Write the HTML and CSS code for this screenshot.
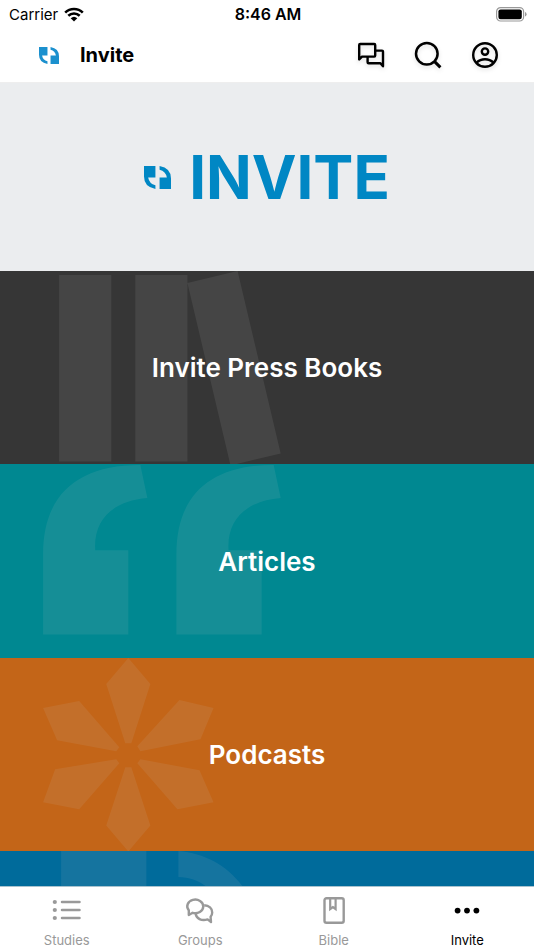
FILE: index.html
```
<!DOCTYPE html>
<html lang="en">

<head>
    <meta charset="UTF-8" />
    <meta name="viewport" content="width=device-width, initial-scale=1" />
    <title>Invite</title>
    <link rel="stylesheet" href="styles.css">
</head>

<body>

    <!-- Header -->
    <header>
        <div class="status-bar">
            <div class="carrier">
                <span>Carrier</span>
                <svg width="20" height="15" viewBox="0 0 20 15" fill="none" stroke="#000" stroke-width="2.6">
                    <path d="M1.2 5.6A12.6 12.6 0 0 1 18.8 5.6" />
                    <path d="M4.3 8.8A8.2 8.2 0 0 1 15.7 8.8" />
                    <path d="M10 14.4L6.7 11.2A4.8 4.8 0 0 1 13.3 11.2Z" fill="#000" stroke="none" />
                </svg>
            </div>
            <div class="time">8:46 AM</div>
            <svg class="battery" width="31" height="15" viewBox="0 0 31 15">
                <rect x="0.6" y="0.6" width="27" height="13.4" rx="4" fill="none" stroke="#999" stroke-width="1.2" />
                <rect x="2.4" y="2.4" width="23.4" height="9.8" rx="2.2" />
                <path d="M29 5V9.6Q30.6 9 30.6 7.3T29 5Z" fill="#999" />
            </svg>
        </div>

        <div class="app-bar">
            <svg class="app-logo" width="20" height="17" viewBox="0 0 26 22" fill="#1b90ce">
                <path d="M0 0H11V11H4Q5 17 11 18.5V22Q0 20 0 10Z" />
                <path d="M26 22H15V11H22Q21 5 15 3.5V0Q26 2 26 12Z" />
            </svg>
            <h1>Invite</h1>
            <div class="actions">
                <button type="button" aria-label="Messages">
                    <svg width="28" height="28" viewBox="0 0 28 28" fill="none" stroke="#000" stroke-width="2.4" stroke-linejoin="round">
                        <path d="M2.2 18.4V4Q2.2 3 3.2 3H17.2Q18.2 3 18.2 4V14.6Q18.2 15.6 17.2 15.6H5Z" />
                        <path d="M18.2 9.6H25Q26 9.6 26 10.6V25.2L23.4 22.2H11.6Q10.6 22.2 10.6 21.2V15.6" />
                    </svg>
                </button>
                <button type="button" aria-label="Search">
                    <svg width="28" height="28" viewBox="0 0 28 28" fill="none" stroke="#000" stroke-width="2.5">
                        <circle cx="12.8" cy="12.8" r="10.8" />
                        <path d="M20.4 20.4L26.4 26.4" stroke-width="3" />
                    </svg>
                </button>
                <button type="button" aria-label="Account">
                    <svg width="28" height="28" viewBox="0 0 28 28" fill="none" stroke="#000" stroke-width="2.4">
                        <circle cx="14" cy="14" r="11.8" />
                        <circle cx="14" cy="10.6" r="3.2" />
                        <path d="M5.6 21.6Q9 18.2 14 18.2T22.4 21.6" />
                    </svg>
                </button>
            </div>
        </div>
    </header>

    <!-- Banner and tiles -->
    <main>
        <div class="banner">
            <svg width="27" height="23" viewBox="0 0 26 22" fill="#0087c4">
                <path d="M0 0H11V11H4Q5 17 11 18.5V22Q0 20 0 10Z" />
                <path d="M26 22H15V11H22Q21 5 15 3.5V0Q26 2 26 12Z" />
            </svg>
            <span>INVITE</span>
        </div>

        <a class="tile books" href="#books">
            <svg class="tile-art" viewBox="0 0 320 193">
                <path d="M59 4H111V190H59ZM135 4H187V190H135ZM187 12L237 0L280 182L230 194Z" />
            </svg>
            <h2>Invite Press Books</h2>
        </a>

        <a class="tile articles" href="#articles">
            <svg class="tile-art" viewBox="0 0 320 193">
                <path d="M43 170V90C43 30 78 1 140 1L147 34C112 37 93 56 95 86H128V170Z" />
                <path d="M176 170V90C176 30 211 1 273 1L280 34C245 37 226 56 228 86H261V170Z" />
            </svg>
            <h2>Articles</h2>
        </a>

        <a class="tile podcasts" href="#podcasts">
            <svg class="tile-art" viewBox="0 0 320 193">
                <path d="M128 0L150 26L131 85H125L106 26Z" />
                <path d="M128 193L150 167L131 109H125L106 167Z" />
                <path d="M43 50L79 43L119 89L116 93L57 82Z" />
                <path d="M213 50L179 42L137 88L140 93L200 81Z" />
                <path d="M43 144L79 151L119 105L116 101L55 111Z" />
                <path d="M213 144L177 151L137 105L140 101L199 112Z" />
            </svg>
            <h2>Podcasts</h2>
        </a>

        <div class="tile more">
            <svg class="tile-art" viewBox="0 0 320 193">
                <path d="M61 0H146V86H61ZM178 0C212 3 240 22 256 60L222 60C214 38 200 27 178 26Z" />
            </svg>
        </div>
    </main>

    <!-- Tab Bar -->
    <nav>
        <a href="#studies">
            <svg width="30" height="30" viewBox="0 0 30 30" fill="#999" stroke="#999" stroke-width="2.5" stroke-linecap="round">
                <path d="M10 7H27.500M10 15H27.500M10 23H27.500" />
                <g stroke="none">
                    <circle cx="2.800" cy="7" r="2.1" />
                    <circle cx="2.800" cy="15" r="2.1" />
                    <circle cx="2.800" cy="23" r="2.1" />
                </g>
            </svg>
            <span>Studies</span>
        </a>
        <a href="#groups">
            <svg width="30" height="30" viewBox="0 0 30 30" fill="none" stroke="#999" stroke-width="2.4" stroke-linejoin="round">
                <path d="M3.8 20V15.400A8 6.800 0 1 1 7.600 17.800Z" />
                <path d="M19.200 10.200C24 10.500 27.200 13.400 27.200 17.400C27.200 19.200 26.600 20.600 25.600 21.800L26 27L22.600 24.400C16.500 26.400 11.200 23.600 10.600 18.400" />
            </svg>
            <span>Groups</span>
        </a>
        <a href="#bible">
            <svg width="30" height="30" viewBox="0 0 30 30" fill="none" stroke="#999" stroke-width="2.4">
                <rect x="5.5" y="3.2" width="19.2" height="24.6" rx="2" />
                <path d="M11.2 3V14L13.900 12L16.600 14V3" stroke-width="2.2" />
            </svg>
            <span>Bible</span>
        </a>
        <a class="active" href="#invite">
            <svg width="30" height="30" viewBox="0 0 30 30">
                <circle cx="5.6" cy="15.6" r="2.9" />
                <circle cx="15" cy="15.6" r="2.9" />
                <circle cx="24.4" cy="15.6" r="2.9" />
            </svg>
            <span>Invite</span>
        </a>
    </nav>

</body>

</html>
```

FILE: styles.css
```
body {
    font-family: Inter, "Liberation Sans", sans-serif;
    background-color: #fff;
    color: #000;
    margin: 0;
    height: 100vh;
    display: flex;
    flex-direction: column;
}

a {
    color: inherit;
    text-decoration: none;
}

svg {
    display: block;
}

h1,
h2 {
    margin: 0;
}

.status-bar {
    display: grid;
    grid-template-columns: 1fr auto 1fr;
    align-items: center;
    height: 28px;
    padding: 0 7px 0 9px;
    font-size: 16px;
}

.carrier {
    display: flex;
    align-items: center;
    gap: 6px;
    font-size: 15px;
}

.time {
    font-weight: 600;
}

.battery {
    justify-self: end;
}

.app-bar {
    display: flex;
    align-items: center;
    height: 54px;
    padding: 0 35px 0 39px;
    border-bottom: 1px solid #eee;
}

.app-logo {
    margin-right: 21px;
}

.app-bar h1 {
    font-size: 20px;
    font-weight: 700;
}

.actions {
    display: flex;
    gap: 29px;
    margin-left: auto;
}

.actions button {
    border: none;
    background: none;
    padding: 0;
    cursor: pointer;
    filter: drop-shadow(0 2px 2px rgba(0, 0, 0, 0.12));
}

main {
    flex: 1;
    min-height: 0;
    overflow-y: auto;
    scrollbar-width: none;
}

.banner {
    display: flex;
    align-items: center;
    justify-content: center;
    gap: 18px;
    aspect-ratio: 534 / 188;
    background-color: #ebedef;
    color: #0087c4;
    font-size: 60px;
    font-weight: 700;
}

.tile {
    display: flex;
    align-items: center;
    justify-content: center;
    position: relative;
    aspect-ratio: 69 / 25;
    color: #fff;
}

.tile h2 {
    position: relative;
    font-size: 26px;
    font-weight: 600;
}

/* faded drawing behind the title */
.tile-art {
    position: absolute;
    top: 0;
    left: 0;
    height: 100%;
    fill: #c8c8c8;
    opacity: 0.1;
}

.books {
    background-color: #363636;
}

.articles {
    background-color: #008891;
}

.podcasts {
    background-color: #c36518;
}

.more {
    background-color: #006b9b;
}

nav {
    display: grid;
    grid-template-columns: repeat(4, 1fr);
    height: 63px;
    border-top: 1px solid #a9c3cf;
    background-color: #fff;
}

nav a {
    display: flex;
    flex-direction: column;
    align-items: center;
    gap: 7px;
    padding-top: 8px;
    color: #999;
    font-size: 13px;
}

nav a.active {
    color: #000;
}
```
